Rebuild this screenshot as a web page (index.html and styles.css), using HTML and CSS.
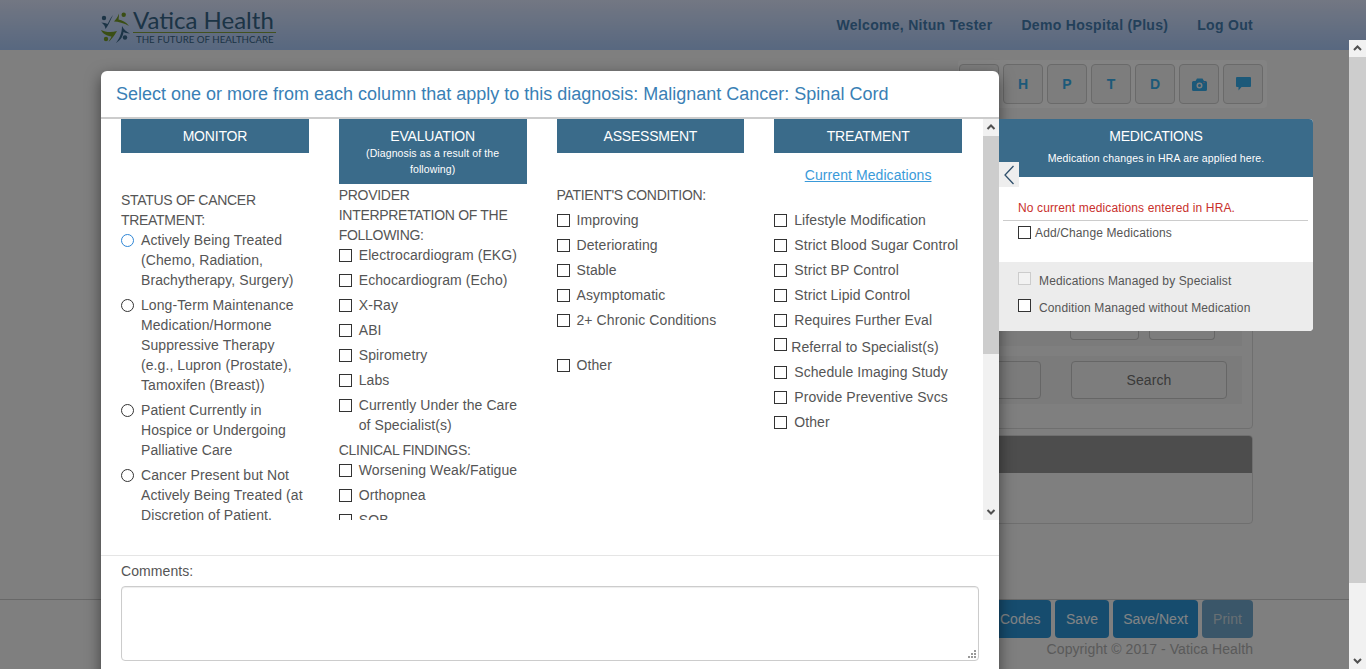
FILE: index.html
```html
<!DOCTYPE html>
<html lang="en">
<head>
    <meta charset="UTF-8">
    <meta name="viewport" content="width=device-width, initial-scale=1.0">
    <title>Vatica Health</title>
    <link rel="stylesheet" href="styles.css">
</head>
<body>
<div class="shell">
    <header class="topbar">
        <div class="logo">
            <svg class="logo-mark" width="32" height="34" viewBox="0 0 32 34">
                <circle cx="4" cy="6" r="2.200" fill="#356284"/>
                <path d="M13 3C10 6 9 10 7.500 12C6 11 3.500 11 1.300 10.500C3 12 5 13 5.500 17C8 14 10 9 13 3Z" fill="#356284"/>
                <circle cx="23.700" cy="2.700" r="2.200" fill="#6f9426"/>
                <path d="M18.700 1.500C18 5 16 7 14 9.500C18 9.500 24 11 29 14C26 10 22 8 18.500 7.500C19 5.500 19 3.500 18.700 1.500Z" fill="#6f9426"/>
                <path d="M1 18C5 20 11 21 17 19C15 22 14 25 8.500 30C10 27 11 26 11.500 24.500C7 24 3 22 1 18Z" fill="#6f9426"/>
                <circle cx="6" cy="27" r="2.200" fill="#6f9426"/>
                <path d="M22 14C24 18 27 20 30 21.500C27 21.500 24.500 20.500 23.500 20C23 24 21 28 16 31C19 27 22 22 22 14Z" fill="#356284"/>
                <circle cx="25" cy="25.500" r="2.200" fill="#356284"/>
            </svg>
            <div class="logo-text">
                <div class="logo-name">Vatica Health</div>
                <div class="logo-tag">THE FUTURE OF HEALTHCARE</div>
            </div>
        </div>
        <nav class="topnav">
            <a>Welcome, Nitun Tester</a>
            <a>Demo Hospital (Plus)</a>
            <a>Log Out</a>
        </nav>
    </header>

    <main class="content">
        <div class="toolbar">
            <span class="tool"></span>
            <span class="tool">H</span>
            <span class="tool">P</span>
            <span class="tool">T</span>
            <span class="tool">D</span>
            <span class="tool">
                <svg width="15" height="13" viewBox="0 0 15 13"><path d="M1.500 3H3.500L5 0.500H10.500L12 3H13.500A1.500 1.500 0 0 1 15 4.500V11.500A1.500 1.500 0 0 1 13.500 13H1.500A1.500 1.500 0 0 1 0 11.500V4.500A1.500 1.500 0 0 1 1.500 3ZM7.500 4.500A3 3 0 1 0 7.500 10.500A3 3 0 1 0 7.500 4.500ZM7.500 6A1.500 1.500 0 1 1 7.500 9A1.500 1.500 0 1 1 7.500 6Z" fill-rule="evenodd" fill="#35a8e4"/><circle cx="12" cy="4.500" r="0.700" fill="#d9a0b0"/></svg>
            </span>
            <span class="tool">
                <svg width="15" height="14" viewBox="0 0 15 14"><path d="M1 0H14A1 1 0 0 1 15 1V9A1 1 0 0 1 14 10H5.500L2.500 13.500V10H1A1 1 0 0 1 0 9V1A1 1 0 0 1 1 0Z" fill="#35a8e4"/></svg>
            </span>
        </div>
        <section class="bg-panel">
            <div class="bg-row">
                <span class="bg-btn bg-btn-a"></span>
                <span class="bg-btn bg-btn-b"></span>
            </div>
            <div class="bg-row bg-row-search">
                <span class="bg-input"></span>
                <span class="bg-btn bg-search">Search</span>
            </div>
        </section>
        <section class="bg-list">
            <div class="bg-list-head"></div>
        </section>
    </main>

    <footer class="pagefoot">
        <div class="foot-buttons">
            <span class="foot-btn foot-codes">Codes</span>
            <span class="foot-btn foot-save">Save</span>
            <span class="foot-btn foot-next">Save/Next</span>
            <span class="foot-btn foot-print">Print</span>
        </div>
        <div class="copyright">Copyright © 2017 - Vatica Health</div>
    </footer>

    <div class="backdrop"></div>

    <div class="modal">
        <h4 class="modal-title">Select one or more from each column that apply to this diagnosis: Malignant Cancer: Spinal Cord</h4>
        <div class="modal-body">
            <div class="columns">
                <div class="col">
                    <div class="col-head">MONITOR</div>
                    <div class="group-title status-title">STATUS OF CANCER TREATMENT:</div>
                    <label class="opt"><input type="radio" name="st" class="is-focus"><span>Actively Being Treated (Chemo, Radiation, Brachytherapy, Surgery)</span></label>
                    <label class="opt"><input type="radio" name="st"><span>Long-Term Maintenance Medication/Hormone Suppressive Therapy (e.g., Lupron (Prostate), Tamoxifen (Breast))</span></label>
                    <label class="opt"><input type="radio" name="st"><span>Patient Currently in Hospice or Undergoing Palliative Care</span></label>
                    <label class="opt"><input type="radio" name="st"><span>Cancer Present but Not Actively Being Treated (at Discretion of Patient.</span></label>
                </div>
                <div class="col">
                    <div class="col-head">EVALUATION<small>(Diagnosis as a result of the following)</small></div>
                    <div class="group-title">PROVIDER<br>INTERPRETATION OF THE FOLLOWING:</div>
                    <label class="opt"><input type="checkbox"><span>Electrocardiogram (EKG)</span></label>
                    <label class="opt"><input type="checkbox"><span>Echocardiogram (Echo)</span></label>
                    <label class="opt"><input type="checkbox"><span>X-Ray</span></label>
                    <label class="opt"><input type="checkbox"><span>ABI</span></label>
                    <label class="opt"><input type="checkbox"><span>Spirometry</span></label>
                    <label class="opt"><input type="checkbox"><span>Labs</span></label>
                    <label class="opt"><input type="checkbox"><span>Currently Under the Care of Specialist(s)</span></label>
                    <div class="group-title">CLINICAL FINDINGS:</div>
                    <label class="opt"><input type="checkbox"><span>Worsening Weak/Fatigue</span></label>
                    <label class="opt"><input type="checkbox"><span>Orthopnea</span></label>
                    <label class="opt"><input type="checkbox"><span>SOB</span></label>
                </div>
                <div class="col">
                    <div class="col-head">ASSESSMENT</div>
                    <div class="group-title condition-title">PATIENT'S CONDITION:</div>
                    <label class="opt"><input type="checkbox"><span>Improving</span></label>
                    <label class="opt"><input type="checkbox"><span>Deteriorating</span></label>
                    <label class="opt"><input type="checkbox"><span>Stable</span></label>
                    <label class="opt"><input type="checkbox"><span>Asymptomatic</span></label>
                    <label class="opt"><input type="checkbox"><span>2+ Chronic Conditions</span></label>
                    <label class="opt opt-gap"><input type="checkbox"><span>Other</span></label>
                </div>
                <div class="col">
                    <div class="col-head">TREATMENT</div>
                    <a class="cur-meds">Current Medications</a>
                    <label class="opt"><input type="checkbox"><span>Lifestyle Modification</span></label>
                    <label class="opt"><input type="checkbox"><span>Strict Blood Sugar Control</span></label>
                    <label class="opt"><input type="checkbox"><span>Strict BP Control</span></label>
                    <label class="opt"><input type="checkbox"><span>Strict Lipid Control</span></label>
                    <label class="opt"><input type="checkbox"><span>Requires Further Eval</span></label>
                    <label class="opt opt-tight"><input type="checkbox"><span>Referral to Specialist(s)</span></label>
                    <label class="opt"><input type="checkbox"><span>Schedule Imaging Study</span></label>
                    <label class="opt"><input type="checkbox"><span>Provide Preventive Svcs</span></label>
                    <label class="opt"><input type="checkbox"><span>Other</span></label>
                </div>
            </div>
            <div class="scrollbar scrollbar-inner">
                <svg class="sb-arrow" width="16" height="17" viewBox="0 0 16 17"><path d="M4.500 10L8 6.500L11.500 10" fill="none" stroke="#505050" stroke-width="2"/></svg>
                <div class="sb-thumb sb-thumb-inner"></div>
                <svg class="sb-arrow sb-arrow-end" width="16" height="17" viewBox="0 0 16 17"><path d="M4.500 7L8 10.500L11.500 7" fill="none" stroke="#505050" stroke-width="2"/></svg>
            </div>
        </div>
        <div class="modal-foot">
            <label class="comments-label" for="comments">Comments:</label>
            <textarea id="comments" class="comments"></textarea>
        </div>
    </div>

    <aside class="med-panel">
        <div class="med-head">
            <div class="med-title">MEDICATIONS</div>
            <div class="med-sub">Medication changes in HRA are applied here.</div>
        </div>
        <button class="med-toggle" aria-label="Collapse">
            <svg width="12" height="20" viewBox="0 0 12 20"><path d="M10.500 1L2 10L10.500 19" fill="none" stroke="#2f4f6b" stroke-width="1.300"/></svg>
        </button>
        <div class="med-body">
            <div class="med-none">No current medications entered in HRA.</div>
            <label class="med-add"><input type="checkbox"><span>Add/Change Medications</span></label>
        </div>
        <div class="med-foot">
            <label class="med-opt"><input type="checkbox" class="is-off" disabled><span>Medications Managed by Specialist</span></label>
            <label class="med-opt"><input type="checkbox"><span>Condition Managed without Medication</span></label>
        </div>
    </aside>

    <div class="scrollbar scrollbar-page">
        <svg class="sb-arrow" width="17" height="17" viewBox="0 0 17 17"><path d="M5 10L8.500 6.500L12 10" fill="none" stroke="#505050" stroke-width="2"/></svg>
        <div class="sb-thumb sb-thumb-page"></div>
        <svg class="sb-arrow sb-arrow-end" width="17" height="17" viewBox="0 0 17 17"><path d="M5 7L8.500 10.500L12 7" fill="none" stroke="#505050" stroke-width="2"/></svg>
    </div>
</div>
</body>
</html>
```

FILE: styles.css
```css
* {
    box-sizing: border-box;
}
html, body {
    margin: 0;
    height: 100%;
    overflow: hidden;
}
body {
    font-family: "Liberation Sans", Arial, sans-serif;
    font-size: 14px;
    line-height: 20px;
    letter-spacing: 0.08px;
    color: #555;
}
.shell {
    position: relative;
    display: flex;
    flex-direction: column;
    height: 669px;
    overflow: hidden;
    background: #f0f0f0;
}

/* page behind the dialog */
.topbar {
    display: flex;
    justify-content: space-between;
    align-items: center;
    flex: 0 0 50px;
    padding: 0 113px 0 100px;
    background: linear-gradient(#d9e1f7, #a6c4f1);
}
.logo {
    display: flex;
    align-items: flex-start;
    gap: 1px;
    height: 50px;
    padding-top: 9px;
}
.logo-mark {
    margin-top: 3px;
}
.logo-name {
    font-family: "Lato", sans-serif;
    font-size: 24px;
    line-height: 22px;
    letter-spacing: 0;
    color: #356284;
}
.logo-tag {
    width: 143px;
    margin-top: 1px;
    padding-left: 3px;
    border-top: 1px solid #7d9a3c;
    font-family: "Lato", sans-serif;
    font-size: 9.700px;
    line-height: 13px;
    letter-spacing: 0;
    white-space: nowrap;
    color: #356284;
}
.topnav {
    display: flex;
    gap: 29px;
    font-weight: bold;
    letter-spacing: 0.3px;
    color: #4279aa;
}
.content {
    display: flex;
    flex-direction: column;
    align-items: flex-end;
    flex: 1;
    padding: 10px 113px 0 0;
}
.toolbar {
    display: flex;
    gap: 4px;
    width: 309px;
    height: 48px;
    margin-right: -14px;
    padding: 4px 0 0 1px;
    background: #f8f8f8;
    border-radius: 4px;
}
.tool {
    display: flex;
    align-items: center;
    justify-content: center;
    width: 40px;
    height: 40px;
    background: #ececec;
    border: 1px solid #c8c8c8;
    border-radius: 4px;
    font-weight: bold;
    font-size: 14px;
    color: #35a8e4;
}
.bg-panel {
    width: 553px;
    height: 310px;
    margin-top: 11px;
    padding: 200px 10px 0 0;
    border: 1px solid #d2d2d2;
    border-radius: 4px;
}
.bg-row {
    display: flex;
    justify-content: flex-end;
    gap: 10px;
    height: 26px;
    padding-right: 27px;
    background: #e8e8e8;
}
.bg-row-search {
    justify-content: flex-start;
    height: 48px;
    margin-top: 10px;
    padding: 5px 15px 0 0;
    gap: 30px;
}
.bg-btn {
    display: block;
    height: 20px;
    background: #ececec;
    border: 1px solid #c0c0c0;
    border-top: 0;
    border-radius: 0 0 4px 4px;
}
.bg-btn-a {
    width: 69px;
}
.bg-btn-b {
    width: 66px;
}
.bg-input {
    flex: 0 0 340px;
    height: 38px;
    border: 1px solid #c0c0c0;
    border-radius: 4px;
}
.bg-search {
    flex: 0 0 156px;
    height: 38px;
    border-top: 1px solid #c0c0c0;
    border-radius: 4px;
    text-align: center;
    line-height: 36px;
    color: #6e6e6e;
}
.bg-list {
    width: 553px;
    height: 89px;
    margin-top: 6px;
    border: 1px solid #d2d2d2;
    border-radius: 4px;
}
.bg-list-head {
    height: 37px;
    background: #919191;
    border-radius: 3px 3px 0 0;
}
.pagefoot {
    flex: 0 0 70px;
    margin-right: 17px;
    border-top: 1px solid #c4c4c4;
    padding-right: 96px;
    text-align: right;
}
.foot-buttons {
    display: flex;
    justify-content: flex-end;
    gap: 4px;
}
.foot-btn {
    height: 38px;
    background: #2a90d0;
    border-radius: 4px;
    line-height: 38px;
    text-align: center;
    letter-spacing: 0;
    color: #f4f8fb;
}
.foot-codes {
    width: 100px;
    padding: 0 11px 0 49px;
}
.foot-save {
    width: 54px;
}
.foot-next {
    width: 85px;
}
.foot-print {
    width: 51px;
    background: #6fa3c6;
    color: #c4d2da;
}
.copyright {
    margin-top: 1px;
    color: #aaa;
}
.backdrop {
    position: absolute;
    top: 0;
    right: 0;
    bottom: 0;
    left: 0;
    background: rgba(0, 0, 0, 0.47);
}

/* dialog */
.modal {
    position: absolute;
    top: 71px;
    left: 101px;
    bottom: -30px;
    width: 898px;
    display: flex;
    flex-direction: column;
    background: #fff;
    border-radius: 6px 6px 0 0;
    box-shadow: 0 5px 15px rgba(0, 0, 0, 0.5);
}
.modal-title {
    flex: 0 0 48px;
    margin: 0;
    padding: 12px 15px 0;
    border-bottom: 2px solid #ccc;
    font-size: 18px;
    font-weight: normal;
    line-height: 22px;
    letter-spacing: 0;
    color: #3a7fb5;
}
.modal-body {
    display: flex;
    height: 401px;
}
.columns {
    display: flex;
    flex: 1;
    padding: 0 6px 0 5px;
    overflow: hidden;
}
.col {
    flex: 0 0 25%;
    padding: 0 15px;
}
.col-head {
    margin-bottom: 1px;
    padding: 7px 0;
    background: #3a6b8a;
    color: #fff;
    text-align: center;
    letter-spacing: -0.2px;
}
.col-head small {
    display: block;
    margin-top: -1px;
    padding: 0 20px;
    font-size: 10.500px;
    line-height: 16px;
    letter-spacing: 0.1px;
}
.group-title {
    letter-spacing: -0.3px;
}
.status-title {
    padding-top: 36px;
}
.condition-title {
    padding-top: 31px;
    margin-bottom: 5px;
}
.opt {
    display: flex;
    gap: 7px;
    margin-bottom: 5px;
}
.opt input {
    flex: none;
    appearance: none;
    width: 13px;
    height: 13px;
    margin: 4px 0 0;
    background: #fff;
    border: 1px solid #333;
}
.opt input[type="radio"] {
    border-radius: 50%;
}
.opt input.is-focus {
    border-color: #2e86d6;
}
.opt-gap {
    margin-top: 25px;
}
.opt-tight {
    gap: 4px;
    margin-top: 7px;
}
.opt-tight input {
    margin-top: 1px;
}
.cur-meds {
    display: block;
    padding-top: 11px;
    margin-bottom: 25px;
    text-align: center;
    text-decoration: underline;
    color: #3a9ad9;
}
.modal-foot {
    margin-top: 35px;
    padding: 5px 20px 0;
    border-top: 1px solid #e5e5e5;
}
.comments-label {
    display: block;
    margin-bottom: 5px;
}
.comments {
    display: block;
    width: 858px;
    height: 75px;
    padding: 6px 12px;
    border: 1px solid #ccc;
    border-radius: 4px;
    box-shadow: inset 0 1px 1px rgba(0, 0, 0, 0.075);
    font: inherit;
}
.comments::-webkit-resizer {
    background: url("data:image/svg+xml,%3Csvg xmlns='http://www.w3.org/2000/svg' width='15' height='15'%3E%3Cg fill='%23999'%3E%3Crect x='11' y='5' width='2' height='2'/%3E%3Crect x='8' y='8' width='2' height='2'/%3E%3Crect x='11' y='8' width='2' height='2'/%3E%3Crect x='5' y='11' width='2' height='2'/%3E%3Crect x='8' y='11' width='2' height='2'/%3E%3Crect x='11' y='11' width='2' height='2'/%3E%3C/g%3E%3C/svg%3E") no-repeat;
}

/* scrollbars */
.scrollbar {
    display: flex;
    flex-direction: column;
    background: #f1f1f1;
}
.scrollbar-inner {
    flex: 0 0 16px;
    width: 16px;
}
.scrollbar-page {
    position: absolute;
    top: 40px;
    right: 0;
    bottom: 0;
    width: 17px;
}
.sb-arrow {
    flex: none;
    display: block;
}
.sb-arrow-end {
    margin-top: auto;
}
.sb-thumb {
    background: #cdcdcd;
}
.sb-thumb-inner {
    height: 218px;
}
.sb-thumb-page {
    height: 526px;
}

/* medications slide-out */
.med-panel {
    position: absolute;
    top: 119px;
    left: 999px;
    width: 314px;
    height: 212px;
    border-radius: 0 4px 4px 0;
    background: #fff;
}
.med-head {
    height: 58px;
    padding-top: 7px;
    background: #3a6b8a;
    border-radius: 0 4px 0 0;
    color: #fff;
    text-align: center;
}
.med-title {
    letter-spacing: -0.25px;
}
.med-sub {
    padding-top: 2px;
    font-size: 10.500px;
    letter-spacing: 0.14px;
}
.med-toggle {
    position: absolute;
    top: 43px;
    left: 0;
    display: flex;
    align-items: center;
    justify-content: center;
    width: 20px;
    height: 25px;
    padding: 0;
    background: #eee;
    border: 0;
}
.med-body {
    height: 85px;
    padding: 21px 5px 0 4px;
    font-size: 12px;
    line-height: 20px;
    letter-spacing: 0.13px;
}
.med-none {
    padding: 0 0 2px 15px;
    border-bottom: 1px solid #ccc;
    color: #c9302c;
}
.med-add {
    display: flex;
    gap: 4px;
    padding: 2px 0 0 15px;
}
.med-foot {
    height: 69px;
    padding-top: 9px;
    background: #ececec;
    border-radius: 0 0 4px 0;
    font-size: 12px;
    letter-spacing: 0.13px;
}
.med-opt {
    display: flex;
    gap: 8px;
    margin-bottom: 7px;
    padding-left: 19px;
}
.med-panel input {
    flex: none;
    appearance: none;
    width: 13px;
    height: 13px;
    margin: 3px 0 0;
    background: #fff;
    border: 1px solid #333;
}
.med-opt input {
    margin-top: 1px;
}
.med-panel input.is-off {
    border-color: #ccc;
    background: #f2f2f2;
}
```
